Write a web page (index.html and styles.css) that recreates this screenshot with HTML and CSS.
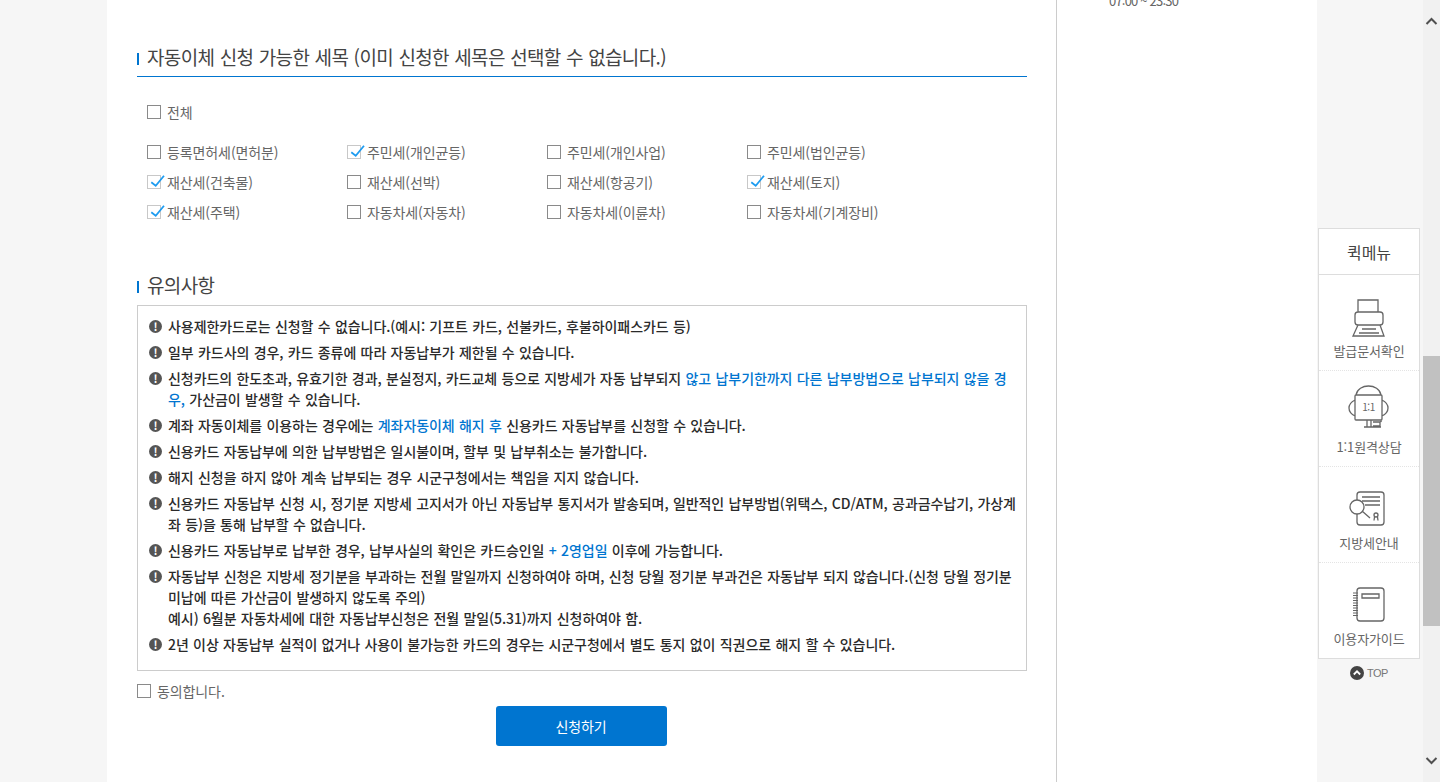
FILE: index.html
```html
<!DOCTYPE html>
<html lang="ko">
<head>
<meta charset="utf-8">
<title>자동이체 신청</title>
<link rel="stylesheet" href="styles.css">
</head>
<body>
<div class="page">
  <div class="gutter-left"></div>
  <main class="main">
    <section class="section-items">
      <h2 class="title title-rule">자동이체 신청 가능한 세목 (이미 신청한 세목은 선택할 수 없습니다.)</h2>
      <label class="check check-all"><span class="box"></span>전체</label>
      <div class="check-grid">
        <label class="check"><span class="box"></span>등록면허세(면허분)</label>
        <label class="check"><span class="box box-on"><svg viewBox="0 0 18 14" class="tick"><path d="M4.300 7.300 8.700 10.700 17 .7"/></svg></span>주민세(개인균등)</label>
        <label class="check"><span class="box"></span>주민세(개인사업)</label>
        <label class="check"><span class="box"></span>주민세(법인균등)</label>
        <label class="check"><span class="box box-on"><svg viewBox="0 0 18 14" class="tick"><path d="M4.300 7.300 8.700 10.700 17 .7"/></svg></span>재산세(건축물)</label>
        <label class="check"><span class="box"></span>재산세(선박)</label>
        <label class="check"><span class="box"></span>재산세(항공기)</label>
        <label class="check"><span class="box box-on"><svg viewBox="0 0 18 14" class="tick"><path d="M4.300 7.300 8.700 10.700 17 .7"/></svg></span>재산세(토지)</label>
        <label class="check"><span class="box box-on"><svg viewBox="0 0 18 14" class="tick"><path d="M4.300 7.300 8.700 10.700 17 .7"/></svg></span>재산세(주택)</label>
        <label class="check"><span class="box"></span>자동차세(자동차)</label>
        <label class="check"><span class="box"></span>자동차세(이륜차)</label>
        <label class="check"><span class="box"></span>자동차세(기계장비)</label>
      </div>
    </section>
    <section class="section-notes">
      <h2 class="title">유의사항</h2>
      <ul class="notes">
        <li>사용제한카드로는 신청할 수 없습니다.(예시: 기프트 카드, 선불카드, 후불하이패스카드 등)</li>
        <li>일부 카드사의 경우, 카드 종류에 따라 자동납부가 제한될 수 있습니다.</li>
        <li>신청카드의 한도초과, 유효기한 경과, 분실정지, 카드교체 등으로 지방세가 자동 납부되지 <em>않고 납부기한까지 다른 납부방법으로 납부되지 않을 경우,</em> 가산금이 발생할 수 있습니다.</li>
        <li>계좌 자동이체를 이용하는 경우에는 <em>계좌자동이체 해지 후</em> 신용카드 자동납부를 신청할 수 있습니다.</li>
        <li>신용카드 자동납부에 의한 납부방법은 일시불이며, 할부 및 납부취소는 불가합니다.</li>
        <li>해지 신청을 하지 않아 계속 납부되는 경우 시군구청에서는 책임을 지지 않습니다.</li>
        <li>신용카드 자동납부 신청 시, 정기분 지방세 고지서가 아닌 자동납부 통지서가 발송되며, 일반적인 납부방법(위택스, CD/ATM, 공과금수납기, 가상계좌 등)을 통해 납부할 수 없습니다.</li>
        <li>신용카드 자동납부로 납부한 경우, 납부사실의 확인은 카드승인일 <em>+ 2영업일</em> 이후에 가능합니다.</li>
        <li>자동납부 신청은 지방세 정기분을 부과하는 전월 말일까지 신청하여야 하며, 신청 당월 정기분 부과건은 자동납부 되지 않습니다.(신청 당월 정기분 미납에 따른 가산금이 발생하지 않도록 주의)<br>예시) 6월분 자동차세에 대한 자동납부신청은 전월 말일(5.31)까지 신청하여야 함.</li>
        <li>2년 이상 자동납부 실적이 없거나 사용이 불가능한 카드의 경우는 시군구청에서 별도 통지 없이 직권으로 해지 할 수 있습니다.</li>
      </ul>
      <label class="check check-agree"><span class="box"></span>동의합니다.</label>
      <div class="actions"><button class="submit" type="button">신청하기</button></div>
    </section>
  </main>
  <aside class="side"><p class="side-time">07:00 ~ 23:30</p></aside>
  <div class="gutter-right">
    <nav class="quick">
      <div class="quick-head">퀵메뉴</div>
      <a class="quick-item">
        <svg class="quick-icon" viewBox="0 0 50 50"><path d="M14 24V12h20v12M14 24h22a3 3 0 0 1 3 3v7a3 3 0 0 1-3 3H14a3 3 0 0 1-3-3v-7a3 3 0 0 1 3-3ZM14 37 9 48h31l-4-11M18 41h14M15 45h20"/></svg>
        <span>발급문서확인</span>
      </a>
      <a class="quick-item">
        <svg class="quick-icon" viewBox="0 0 50 50"><path d="M12 11C14-1 35-1 37 11M12 11h25a1 1 0 0 1 1 1v23a1 1 0 0 1-1 1H12a1 1 0 0 1-1-1V12a1 1 0 0 1 1-1ZM11 16c-8 4-8 12 0 16M38 16c8 4 8 12 0 16M23 36v7M27 36v7M20 43h17M29 38h7v4h-7M38 33c0 3-1 5-2 5"/><text x="24.500" y="27" class="icon-text">1:1</text></svg>
        <span>1:1원격상담</span>
      </a>
      <a class="quick-item">
        <svg class="quick-icon" viewBox="0 0 50 50"><path d="M13 20V15a3 3 0 0 1 3-3h21a3 3 0 0 1 3 3v27a3 3 0 0 1-3 3H16a3 3 0 0 1-3-3v-8M18 17h18M18 21h18M21 25h15M18 31l8 7"/><circle cx="13" cy="27" r="7"/><circle cx="32" cy="35" r="2"/><path d="M30.500 37 30 40.500M33.500 37 34 40.500"/></svg>
        <span>지방세안내</span>
      </a>
      <a class="quick-item">
        <svg class="quick-icon" viewBox="0 0 50 50"><path d="M13 15a3 3 0 0 1 3-3h21a3 3 0 0 1 3 3v27a3 3 0 0 1-3 3H16a3 3 0 0 1-3-3ZM18 18h17v4H18Z"/><path class="rings" d="M9 17h5M9 19.500h5M9 22h5M9 24.500h5M9 27h5M9 29.500h5M9 32h5M9 34.500h5M9 37h5M9 39.500h5"/></svg>
        <span>이용자가이드</span>
      </a>
    </nav>
    <a class="top"><svg class="top-icon" viewBox="0 0 14 14"><circle cx="7" cy="7" r="7"/><path d="M3.800 8.500 7 5.300l3.200 3.200"/></svg>TOP</a>
  </div>
  <div class="scrollbar">
    <svg class="arrow arrow-up" viewBox="0 0 17 17"><path d="M3.500 11 8.500 6 13.500 11"/></svg>
    <div class="track"><div class="thumb"></div></div>
    <svg class="arrow arrow-down" viewBox="0 0 17 17"><path d="M3.500 6 8.500 11 13.500 6"/></svg>
  </div>
</div>
</body>
</html>
```
FILE: styles.css
```css
* { box-sizing: border-box; }
html, body { margin: 0; height: 782px; overflow: hidden; }
body {
  font-family: "Noto Sans CJK KR", "Noto Sans", sans-serif;
  color: #666;
  background: #f6f6f6;
}
.page { display: flex; height: 782px; }
.gutter-left { width: 107px; flex: none; }
.main {
  width: 950px;
  flex: none;
  padding: 0 29px 0 30px;
  background: #fff;
  border-right: 1px solid #ccc;
}
.side { width: 260px; flex: none; background: #fff; overflow: hidden; }
.side-time {
  margin: -9px 0 0 52px;
  font-size: 13px;
  line-height: 20px;
  letter-spacing: -0.8px;
  color: #666;
}
.title {
  position: relative;
  margin: 0;
  padding-left: 10px;
  font-size: 19px;
  font-weight: 400;
  line-height: 26px;
  letter-spacing: -0.65px;
  word-spacing: 0.7px;
  color: #444;
}
.title::before {
  content: "";
  position: absolute;
  left: 0;
  top: 9px;
  width: 2px;
  height: 12px;
  background: #0075d0;
}
.section-items { padding-top: 44px; }
.title-rule { height: 33px; border-bottom: 1px solid #0075d0; }
.check {
  display: flex;
  align-items: center;
  font-size: 14px;
  line-height: 20px;
  letter-spacing: -0.1px;
  color: #666;
}
.box {
  position: relative;
  width: 14px;
  height: 14px;
  margin-right: 6px;
  flex: none;
  border: 1px solid #8a8a8a;
  background: #fff;
}
.box-on { border-color: #c8c8c8; }
.tick {
  position: absolute;
  left: -1px;
  top: -1px;
  width: 18px;
  height: 14px;
  fill: none;
  stroke: #1e9cf0;
  stroke-width: 1.8;
}
.check-all { margin: 25px 0 0 10px; }
.check-grid {
  display: grid;
  grid-template-columns: repeat(4, 200px);
  grid-auto-rows: 30px;
  margin: 15px 0 0 10px;
  align-items: center;
}
.section-notes { margin-top: 45px; }
.section-notes .title { margin-bottom: 7px; }
.notes {
  margin: 0;
  padding: 10px 10px 5px 30px;
  list-style: none;
  height: 366px;
  border: 1px solid #ccc;
  font-size: 14px;
  font-weight: 500;
  line-height: 21px;
  letter-spacing: -0.06px;
  word-spacing: 0.5px;
  color: #2a2a2a;
}
.notes li { position: relative; margin-bottom: 5px; }
.notes li::before {
  content: "!";
  position: absolute;
  left: -19px;
  top: 4px;
  width: 13px;
  height: 13px;
  border-radius: 50%;
  background: #555;
  color: #fff;
  font-size: 11px;
  font-weight: 700;
  line-height: 13px;
  letter-spacing: 0;
  text-align: center;
}
.notes em { font-style: normal; color: #0075d0; }
.check-agree { margin-top: 10px; }
.actions { display: flex; justify-content: center; margin-top: 5px; padding-right: 2px; }
.submit {
  width: 171px;
  height: 40px;
  border: 0;
  border-radius: 3px;
  background: #0075d0;
  color: #fff;
  font: inherit;
  font-size: 14px;
  letter-spacing: -0.1px;
}
.gutter-right {
  width: 106px;
  flex: none;
  padding: 228px 3px 0 1px;
}
.quick { background: #fff; border: 1px solid #ddd; height: 431px; }
.quick-head {
  height: 46px;
  border-bottom: 1px solid #ddd;
  font-size: 16px;
  line-height: 46px;
  letter-spacing: -0.1px;
  text-align: center;
  color: #444;
}
.quick-item {
  display: flex;
  flex-direction: column;
  align-items: center;
  height: 96px;
  padding-top: 13px;
  border-bottom: 1px dotted #e4e4e4;
  font-size: 13px;
  line-height: 18px;
  letter-spacing: -0.1px;
  color: #666;
}
.quick-item:last-child { border-bottom: 0; }
.quick-icon {
  width: 50px;
  height: 50px;
  margin-bottom: 4px;
  flex: none;
  fill: none;
  stroke: #666;
  stroke-width: 1.300;
}
.rings { stroke-width: 1.200; }
.icon-text {
  fill: #666;
  stroke: none;
  font-size: 10px;
  letter-spacing: -0.5px;
  text-anchor: middle;
}
.top {
  display: flex;
  justify-content: center;
  align-items: center;
  gap: 3px;
  margin-top: 6px;
  font-family: "Liberation Sans", sans-serif;
  font-size: 11px;
  line-height: 16px;
  letter-spacing: -0.5px;
  color: #777;
}
.top-icon { width: 14px; height: 14px; fill: #444; }
.top-icon path { fill: none; stroke: #fff; stroke-width: 1.800; }
.scrollbar {
  width: 17px;
  flex: none;
  display: flex;
  flex-direction: column;
  background: #f1f1f1;
}
.arrow { width: 17px; height: 17px; flex: none; fill: none; stroke: #505050; stroke-width: 2; }
.arrow-up { margin-top: 13px; }
.arrow-down { margin-bottom: 13px; }
.track { flex: 1; padding-top: 326px; }
.thumb { height: 270px; background: #c1c1c1; }
```
